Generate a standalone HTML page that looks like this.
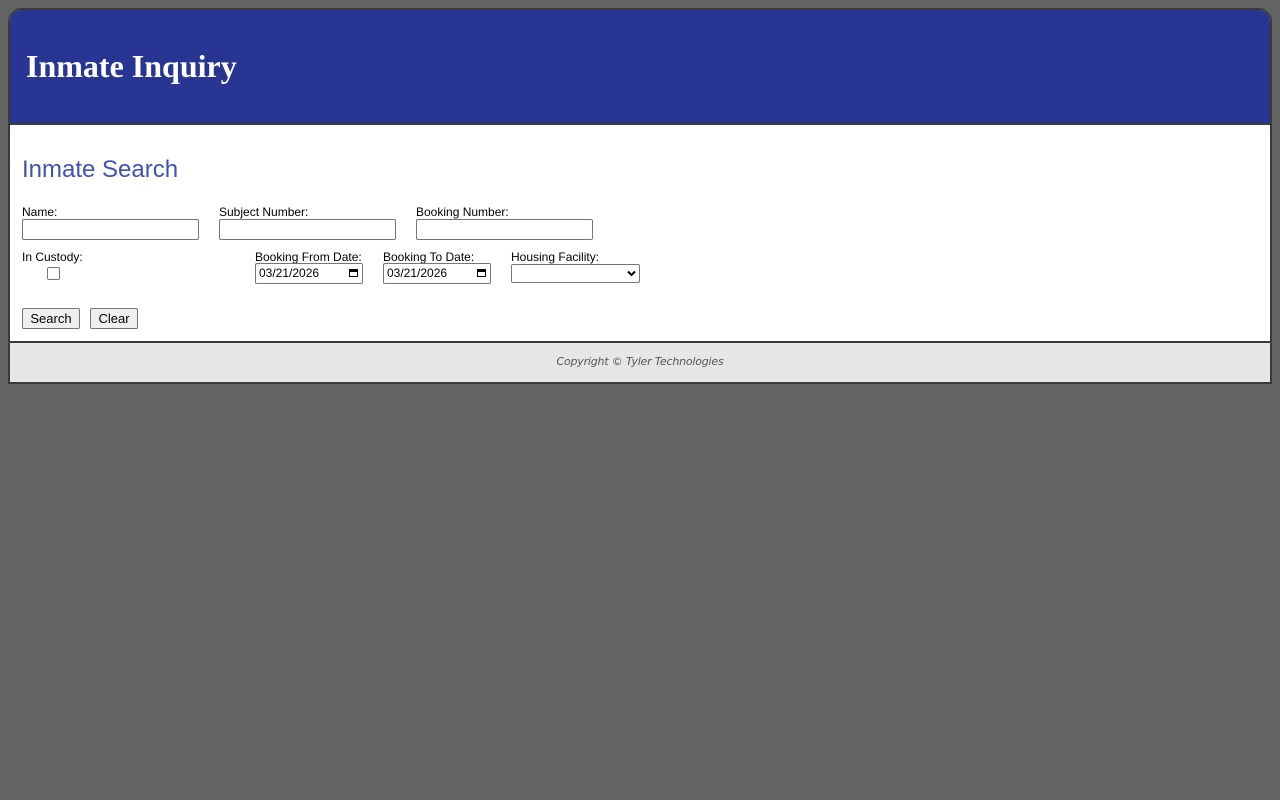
<!DOCTYPE html>
<html><head><style>
body{margin:0;background:#636363;width:1280px;height:800px;position:relative;font-family:"Liberation Sans",Arial,sans-serif;}
.box{position:absolute;left:8px;top:8px;width:1260px;height:372px;border:2px solid #3a3a3a;border-radius:14px 14px 0 0;background:#fff;overflow:hidden}
.hdr{position:absolute;left:0;top:0;width:1260px;height:113px;background:#283593;border-bottom:2px solid #3a3a3a}
.hdr h1{position:absolute;left:16px;top:38px;margin:0;font:bold 32px "Liberation Serif",serif;color:#fff}
.ftr{position:absolute;left:0;top:331px;width:1260px;height:41px;background:#e6e6e6;border-top:2px solid #3a3a3a;text-align:center;font:italic 11px "DejaVu Sans",sans-serif;letter-spacing:-0.2px;color:#555;line-height:38px}
.a{position:absolute;font-size:12px;color:#000}
h2{position:absolute;left:22px;top:156px;margin:0;font-weight:normal;font-size:24px;color:#3f51b5}
.in{position:absolute;box-sizing:border-box;border:1px solid #767676;border-radius:2px;background:#fff;height:21px}
.btn{position:absolute;box-sizing:border-box;border:1px solid #767676;border-radius:2px;background:#efefef;height:21px;font-size:13px;text-align:center;line-height:19px}
</style></head><body>
<div class="box"><div class="hdr"><h1>Inmate Inquiry</h1></div>
<div class="ftr">Copyright © Tyler Technologies</div></div>
<h2>Inmate Search</h2>
<div class="a" style="left:22px;top:205px">Name:</div>
<div class="a" style="left:219px;top:205px">Subject Number:</div>
<div class="a" style="left:416px;top:205px">Booking Number:</div>
<div class="in" style="left:22px;top:219px;width:177px"></div>
<div class="in" style="left:219px;top:219px;width:177px"></div>
<div class="in" style="left:416px;top:219px;width:177px"></div>
<div class="a" style="left:22px;top:250px">In Custody:</div>
<div class="a" style="left:255px;top:250px">Booking From Date:</div>
<div class="a" style="left:383px;top:250px">Booking To Date:</div>
<div class="a" style="left:511px;top:250px">Housing Facility:</div>
<div class="in" style="left:47px;top:267px;width:13px;height:13px;border-radius:2px"></div>
<div class="in a" style="left:255px;top:263px;width:108px;font-size:12px;line-height:19px;padding-left:3px">03/21/2026<span style="position:absolute;right:4px;top:5px;width:9px;height:8px;border:1px solid #000;border-top-width:3px;box-sizing:border-box"></span></div>
<div class="in a" style="left:383px;top:263px;width:108px;font-size:12px;line-height:19px;padding-left:3px">03/21/2026<span style="position:absolute;right:4px;top:5px;width:9px;height:8px;border:1px solid #000;border-top-width:3px;box-sizing:border-box"></span></div>
<div class="in" style="left:511px;top:264px;width:129px;height:19px"><svg style="position:absolute;right:3px;top:5px" width="9" height="7" viewBox="0 0 9 7"><path d="M1 1.5L4.5 5 8 1.5" stroke="#000" stroke-width="2" fill="none"/></svg></div>
<div class="btn" style="left:22px;top:308px;width:58px">Search</div>
<div class="btn" style="left:90px;top:308px;width:48px">Clear</div>
</body></html>
